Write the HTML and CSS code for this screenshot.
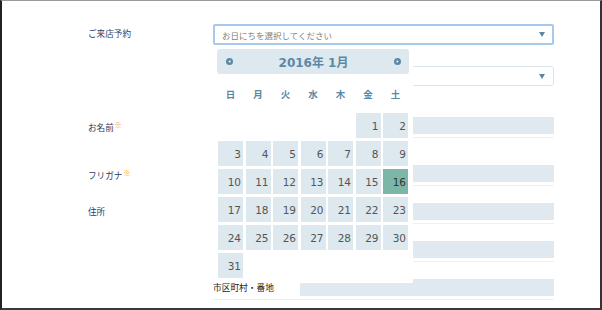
FILE: index.html
```html
<!DOCTYPE html>
<html lang="ja">
<head>
  <meta charset="UTF-8">
  <title>ご来店予約</title>
  <link rel="stylesheet" href="styles.css">
</head>
<body>
  <div class="frame">
    <form class="form">
      <div class="row row-visit">
        <div class="label label-tall">ご来店予約</div>
        <div class="field">
          <div class="select is-open">
            <span>お日にちを選択してください</span>
            <span class="caret"></span>
          </div>
          <div class="select select-time">
            <span></span>
            <span class="caret"></span>
          </div>

          <div class="calendar">
            <div class="cal-head">
              <svg class="cal-arrow" width="7" height="7" viewBox="0 0 7 7"><circle cx="3.5" cy="3.5" r="3.5" fill="#5b88a6"/><polygon points="4.4,2 2.3,3.5 4.4,5" fill="#fff"/></svg>
              <span class="cal-title">2016年 1月</span>
              <svg class="cal-arrow" width="7" height="7" viewBox="0 0 7 7"><circle cx="3.5" cy="3.5" r="3.5" fill="#5b88a6"/><polygon points="2.6,2 4.7,3.5 2.6,5" fill="#fff"/></svg>
            </div>
            <div class="cal-week">
              <span>日</span><span>月</span><span>火</span><span>水</span><span>木</span><span>金</span><span>土</span>
            </div>
            <div class="cal-days">
              <span class="day is-empty"></span><span class="day is-empty"></span><span class="day is-empty"></span><span class="day is-empty"></span><span class="day is-empty"></span>
              <span class="day">1</span><span class="day">2</span>
              <span class="day">3</span><span class="day">4</span><span class="day">5</span><span class="day">6</span><span class="day">7</span><span class="day">8</span><span class="day">9</span>
              <span class="day">10</span><span class="day">11</span><span class="day">12</span><span class="day">13</span><span class="day">14</span><span class="day">15</span><span class="day is-selected">16</span>
              <span class="day">17</span><span class="day">18</span><span class="day">19</span><span class="day">20</span><span class="day">21</span><span class="day">22</span><span class="day">23</span>
              <span class="day">24</span><span class="day">25</span><span class="day">26</span><span class="day">27</span><span class="day">28</span><span class="day">29</span><span class="day">30</span>
              <span class="day">31</span>
            </div>
          </div>
        </div>
      </div>

      <div class="row row-name">
        <div class="label">お名前<span class="req">※</span></div>
        <div class="field">
          <div class="line"><div class="bar"></div></div>
        </div>
      </div>

      <div class="row row-kana">
        <div class="label">フリガナ<span class="req">※</span></div>
        <div class="field">
          <div class="line"><div class="bar"></div></div>
        </div>
      </div>

      <div class="row row-address">
        <div class="label">住所</div>
        <div class="field">
          <div class="line"><div class="bar"></div></div>
          <div class="line"><div class="bar"></div></div>
          <div class="line line-sub">
            <span class="sub-label">市区町村・番地</span>
            <div class="bar"></div>
          </div>
        </div>
      </div>
    </form>
  </div>
</body>
</html>
```

FILE: styles.css
```css
body {
  margin: 0;
  background: #fff;
}
.frame {
  box-sizing: border-box;
  width: 602px;
  height: 310px;
  border-style: solid;
  border-width: 1px 2px 2px 2px;
  border-color: #9a9a9a #333 #3a3a3a #222;
  padding: 23px 0 0 86px;
  font-family: "Noto Sans CJK JP", sans-serif;
  overflow: hidden;
}
.row {
  display: grid;
  grid-template-columns: 125px 341px;
  align-items: start;
}
.row-name {
  margin-top: 31px;
}
.row-kana {
  margin-top: 27px;
}
.row-address {
  margin-top: 17px;
}
.label {
  font-size: 8.6px;
  line-height: 16px;
  color: #2b3d66;
  white-space: nowrap;
}
.label-tall {
  line-height: 19px;
}
.req {
  color: #f5a623;
  font-family: "Noto Sans CJK JP", sans-serif;
  font-weight: bold;
  font-size: 7.5px;
  vertical-align: 3px;
  margin-left: 0.5px;
}
.field {
  position: relative;
}

/* selects */
.select {
  box-sizing: border-box;
  height: 20px;
  border: 1px solid #dde5ea;
  border-radius: 3px;
  display: flex;
  align-items: center;
  justify-content: space-between;
  padding: 0 8px;
  font-size: 8.5px;
  color: #808080;
}
.select.is-open {
  height: 21px;
  border: 2px solid #a6c9ec;
  border-radius: 2px;
  padding: 0 7px 0 7px;
}
.select-time {
  margin-top: 21px;
}
.caret {
  width: 0;
  height: 0;
  border-left: 3.5px solid transparent;
  border-right: 3.5px solid transparent;
  border-top: 5px solid #5b86a3;
}

/* text inputs */
.line {
  padding-bottom: 3px;
  border-bottom: 1px solid #ecf0f3;
}
.line + .line {
  margin-top: 17px;
}
.bar {
  height: 17px;
  background: #dfe9ef;
}
.line-sub {
  display: grid;
  grid-template-columns: 87px 1fr;
  align-items: center;
}
.sub-label {
  font-size: 8.7px;
  color: #222;
  white-space: nowrap;
}

/* calendar popup */
.calendar {
  position: absolute;
  top: 23px;
  left: 0;
  z-index: 1;
  box-sizing: border-box;
  width: 200px;
  padding: 2px 4px 5px 4px;
  background: #fff;
}
.cal-head {
  height: 25px;
  background: #dde8ef;
  border-radius: 3px;
  display: flex;
  align-items: center;
  justify-content: space-between;
  padding: 0 8px 0 9px;
}
.cal-arrow {
  display: block;
}
.cal-title {
  font-family: "DejaVu Sans", "Noto Sans CJK JP", sans-serif;
  font-size: 12px;
  font-weight: bold;
  color: #5b88a6;
}
.cal-week,
.cal-days {
  display: grid;
  grid-template-columns: repeat(7, 25px);
  column-gap: 2.5px;
  margin-left: 1px;
}
.cal-week {
  height: 39px;
  align-items: center;
  text-align: center;
  font-size: 9.5px;
  font-weight: bold;
  color: #5b88a6;
}
.cal-days {
  grid-auto-rows: 25px;
  row-gap: 3px;
}
.day {
  display: flex;
  align-items: center;
  justify-content: flex-end;
  padding-right: 2px;
  background: #dde8ef;
  font-family: "DejaVu Sans", sans-serif;
  font-size: 10.5px;
  color: #555;
}
.day.is-empty {
  background: none;
}
.day.is-selected {
  background: #7bb6a6;
  color: #333;
}
```
